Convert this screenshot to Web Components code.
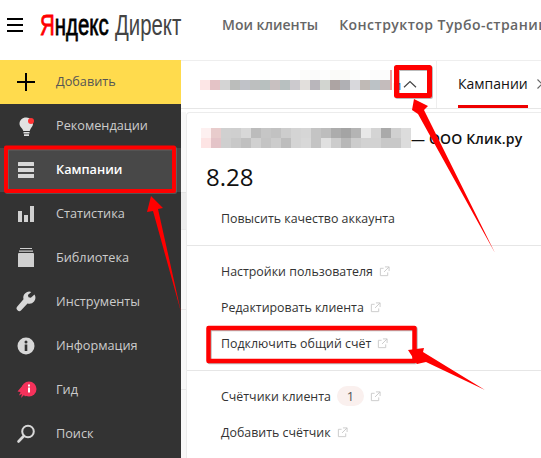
<!DOCTYPE html>
<html lang="ru">
<head>
<meta charset="utf-8">
<title>Яндекс Директ</title>
<style>
  html, body { margin: 0; height: 458px; overflow: hidden; background: #fff; }
  body { font-family: "Open Sans", "Liberation Sans", sans-serif; }
</style>
</head>
<body>
<direct-app>
  <app-header slot="header"></app-header>
  <side-menu slot="menu">
    <side-item kind="add" label="Добавить">
      <svg slot="icon" width="24" height="24" viewBox="0 0 24 24"><path d="M3 11h18v2H3zM11 3h2v18h-2z" fill="#000"/></svg>
    </side-item>
    <side-item label="Рекомендации">
      <svg slot="icon" width="24" height="24" viewBox="0 0 24 24"><path d="M12 3.500a6.600 6.600 0 0 1 7 6.600c0 2.600-2.600 4-3.300 6.900h-6.400C8.600 14.100 5.500 13 5.500 9.800 5.500 6.200 8.500 3.500 12 3.500zM9.500 18h6v1.600h-6zM10 20.300h5V22h-5z" fill="#e2e2e2"/><circle cx="17" cy="7" r="3" fill="#f33"/></svg>
    </side-item>
    <side-item kind="active" label="Кампании">
      <svg slot="icon" width="24" height="24" viewBox="0 0 24 24"><path d="M4 4.500q0-.5.500-.5h15q.5 0 .5.500V8H4zM4 10h16v4H4zM4 16h16v3.500q0 .5-.5.5h-15q-.5 0-.5-.5z" fill="#d8d8d8"/></svg>
    </side-item>
    <side-item label="Статистика">
      <svg slot="icon" width="24" height="24" viewBox="0 0 24 24"><path d="M4 9h4v11H4zM10 13h4v7h-4zM16 4h4v16h-4z" fill="#d0d0d0"/></svg>
    </side-item>
    <side-item label="Библиотека">
      <svg slot="icon" width="24" height="24" viewBox="0 0 24 24"><path d="M6 2h12v1H6zM5 4.500h14v1.200H5zM4 8q0-1 1-1h14q1 0 1 1v13H4z" fill="#d0d0d0"/></svg>
    </side-item>
    <side-item label="Инструменты">
      <svg slot="icon" width="24" height="24" viewBox="0 0 24 24"><path d="M20.500 4.600l-3.700 3.200-2.300-.6-.6-2.300L17.300 2a6 6 0 0 0-7.800 7.200L3.300 16.600a2.600 2.600 0 0 0 .2 3.700 2.600 2.600 0 0 0 3.700-.1l6.300-6.800a6 6 0 0 0 7-8.800z" fill="#d8d8d8"/></svg>
    </side-item>
    <side-item label="Информация">
      <svg slot="icon" width="24" height="24" viewBox="0 0 24 24"><circle cx="12" cy="12" r="8.500" fill="#d8d8d8"/><path d="M10.700 10.600h2.600v6.400h-2.600z" fill="#333"/><circle cx="12" cy="8" r="1.500" fill="#333"/></svg>
    </side-item>
    <side-item label="Гид">
      <svg slot="icon" width="24" height="24" viewBox="0 0 24 24"><circle cx="15" cy="11" r="7.500" fill="#f5325b"/><path d="M9 7L3.500 13.500l3 .5L5 17.500l3-1.500-1 4 3-3 1 1.500 2-1.500z" fill="#f5325b"/><path d="M14 6.500h2v2h-2zM14 9.500h2v5h-2z" fill="#fff"/></svg>
    </side-item>
    <side-item label="Поиск">
      <svg slot="icon" width="24" height="24" viewBox="0 0 24 24"><circle cx="14" cy="9.500" r="5.800" fill="none" stroke="#d8d8d8" stroke-width="2"/><path d="M9.800 14L4.500 19.500" stroke="#d8d8d8" stroke-width="2.600" stroke-linecap="round"/></svg>
    </side-item>
  </side-menu>
  <sub-bar slot="bar"></sub-bar>
  <account-popup slot="popup">
    <popup-section>
      <popup-link>Повысить качество аккаунта</popup-link>
    </popup-section>
    <popup-section>
      <popup-link external>Настройки пользователя</popup-link>
      <popup-link external>Редактировать клиента</popup-link>
      <popup-link external>Подключить общий счёт</popup-link>
    </popup-section>
    <popup-section>
      <popup-link external badge="1">Счётчики клиента</popup-link>
      <popup-link external>Добавить счётчик</popup-link>
    </popup-section>
  </account-popup>
  <red-marks slot="marks"></red-marks>
</direct-app>

<script>
const shell = document.createElement('template')
shell.innerHTML = `
  <style>
    :host {
      display: grid;
      grid-template-columns: 181px 1fr;
      grid-template-rows: 60px 398px;
      width: 541px;
      height: 458px;
      overflow: hidden;
      position: relative;
    }
    .head { grid-column: 1 / 3; }
    .main { display: flex; flex-direction: column; min-width: 0; overflow: hidden; }
    .below { display: grid; grid-template-columns: 5px 1fr; flex: 1; min-height: 0; }
    .strip {
      background:
        linear-gradient(#e4e4e4, #e4e4e4) 0 80px / 100% 1px no-repeat,
        linear-gradient(#e8e8e8, #e8e8e8) 0 117px / 100% 1px no-repeat,
        linear-gradient(#e8e8e8, #e8e8e8) 0 197px / 100% 1px no-repeat,
        linear-gradient(#e8e8e8, #e8e8e8) 0 277px / 100% 1px no-repeat,
        linear-gradient(#ededed, #ededed) 0 81px / 100% 36px no-repeat,
        #f8f8f8;
    }
  </style>
  <div class="head"><slot name="header"></slot></div>
  <slot name="menu"></slot>
  <div class="main">
    <slot name="bar"></slot>
    <div class="below">
      <div class="strip"></div>
      <slot name="popup"></slot>
    </div>
  </div>
  <slot name="marks"></slot>
`
customElements.define('direct-app', class extends HTMLElement {
  constructor () {
    super()
    this.attachShadow({ mode: 'open' }).appendChild(shell.content.cloneNode(true))
  }
})

const header = document.createElement('template')
header.innerHTML = `
  <style>
    :host {
      display: flex;
      align-items: center;
      height: 60px;
      background: #fff;
      white-space: nowrap;
      overflow: hidden;
    }
    .burger { width: 16px; height: 14px; margin: 0 17px 10px 7px; flex: none;
      background: linear-gradient(#000 2px, transparent 2px) 0 0 / 100% 6px; }
    .logo {
      font-family: "Liberation Sans", sans-serif;
      font-size: 30px;
      line-height: 36px;
      width: 142px;
      flex: none;
      margin-bottom: 11px;
      color: #000;
    }
    .logo div { display: inline-block; transform: scaleX(.68); transform-origin: 0 50%; }
    .logo b { font-weight: 400; -webkit-text-stroke: .8px #000; }
    .logo i { font-style: normal; color: #f00; -webkit-text-stroke: .8px #f00; }
    .logo span { color: #444; margin-left: 1px; }
    nav { display: flex; gap: 21px; margin-left: 40px; font-size: 14px; font-weight: 600; color: #666; margin-bottom: 11px; }
    .wide { letter-spacing: .45px; }
  </style>
  <div class="burger"></div>
  <div class="logo"><div><b><i>Я</i>ндекс</b> <span>Директ</span></div></div>
  <nav><span>Мои клиенты</span><span class="wide">Конструктор Турбо-страниц</span></nav>
`
customElements.define('app-header', class extends HTMLElement {
  constructor () {
    super()
    this.attachShadow({ mode: 'open' }).appendChild(header.content.cloneNode(true))
  }
})

customElements.define('side-menu', class extends HTMLElement {
  constructor () {
    super()
    this.attachShadow({ mode: 'open' }).innerHTML = `
      <style>:host { display: block; background: #333; height: 398px; }</style>
      <slot></slot>`
  }
})

customElements.define('side-item', class extends HTMLElement {
  constructor () {
    super()
    this.attachShadow({ mode: 'open' }).innerHTML = `
      <style>
        :host {
          display: flex;
          align-items: center;
          gap: 18px;
          height: 44px;
          padding-left: 14px;
          font-size: 12.700px;
          color: #ccc;
          white-space: nowrap;
        }
        :host([kind="add"]) { background: #ffdb4d; color: #555; }
        :host([kind="active"]) { background: #484848; color: #fff; font-weight: 600; }
        slot[name="icon"] { display: block; height: 24px; }
        span { position: relative; top: -1px; }
      </style>
      <slot name="icon"></slot>
      <span>${this.getAttribute('label')}</span>`
  }
})

/* pixelated stand-in for the hidden account name */
customElements.define('pixel-blur', class extends HTMLElement {
  constructor () {
    super()
    const rows = this.getAttribute('rows').split('|').map((row) => row.split(','))
    const size = this.getAttribute('size') || 10
    const cells = rows.flat().map((color) => `<i style="background:${color}"></i>`).join('')
    this.attachShadow({ mode: 'open' }).innerHTML = `
      <style>
        :host { display: grid; grid-template-columns: repeat(${rows[0].length}, ${size}px); grid-auto-rows: ${size}px; flex: none; }
        i { display: block; }
      </style>${cells}`
  }
})

const bar = document.createElement('template')
bar.innerHTML = `
  <style>
    :host {
      display: flex;
      flex: none;
      height: 47px;
      border-top: 1px solid #eee;
      border-bottom: 1px solid #e6e6e6;
      background: #fff;
      white-space: nowrap;
      overflow: hidden;
      margin-bottom: 3px;
    }
    .name { display: flex; align-items: flex-start; padding: 9px 0 0 19px; width: 222px; flex: none; box-sizing: border-box; }
    .cut { width: 2px; height: 20px; background: #ee9a9a; flex: none; }
    .tail { font-size: 13px; color: #1a3a8a; line-height: 12px; margin: 9px 0 0 1px; }
    .arrow { width: 14px; height: 8px; margin-top: 19px; flex: none; }
    .tabs { display: flex; margin-left: 19px; border-left: 1px solid #eee; padding-left: 21px; font-size: 14px; color: #111; gap: 9px; height: 47px; }
    .tab { display: block; height: 44px; border-bottom: 3px solid #e00; line-height: 46px; box-sizing: content-box; }
    .next { width: 6px; height: 10px; margin-top: 18px; flex: none; }
  </style>
  <div class="name">
    <pixel-blur size="10" rows="#fff,#fff,#fff,#fff,#fff,#fff,#fdfefd,#fff,#fff,#fff,#fcfcfa,#fafafa,#fdfdfd,#fafaf8,#fafaf8,#fcfdfc,#fff,#fcfcfc,#fcfcfc|#fde6e6,#e4c3c6,#d4d4d4,#bbbdbb,#c0c2c8,#bdbfbf,#b8c0bf,#c8c0c0,#b8c0c0,#cccace,#e2dfdc,#b9b6bb,#d2d5d0,#ada4a3,#b0b0b4,#d8d8dc,#c0bab6,#bcc2c6,#c4bcbc"></pixel-blur>
    <div class="cut"></div>
    <div class="tail">и</div>
  </div>
  <svg class="arrow" viewBox="0 0 14 8"><path d="M1 7.200L7 1.500l6 5.700" fill="none" stroke="#444" stroke-width="1.200"/></svg>
  <div class="tabs">
    <span class="tab">Кампании</span>
    <svg class="next" viewBox="0 0 6 10"><path d="M.5.500L5 5 .5 9.500" fill="none" stroke="#666" stroke-width="1.200"/></svg>
  </div>
`
customElements.define('sub-bar', class extends HTMLElement {
  constructor () {
    super()
    this.attachShadow({ mode: 'open' }).appendChild(bar.content.cloneNode(true))
  }
})

const popup = document.createElement('template')
popup.innerHTML = `
  <style>
    :host {
      display: block;
      background: #fff;
      border-top: 1px solid #ececec;
      border-left: 1px solid #ececec;
      border-top-left-radius: 4px;
      overflow: hidden;
    }
    .title { display: flex; align-items: center; padding: 15px 0 0 14px; font-size: 14px; font-weight: 600; letter-spacing: .15px; color: #111; white-space: nowrap; }
    .num { font-size: 24px; line-height: 32px; color: #111; padding: 13px 0 0 19px; }
    ::slotted(popup-section:first-of-type) { border-top: 0; padding: 7px 0 9px; }
  </style>
  <div class="title">
    <pixel-blur size="10" rows="#fdf0f0,#e8cccc,#d0d0d0,#cfcfcf,#d8d8d8,#bcbcbc,#c6c6c6,#c2c2c2,#cdcdcd,#d4d4d4,#d6d6d6,#c4c4c4,#bdbdbd,#acacac,#a4a4a4,#b4b4b4,#e8e8e8,#d4d4d4,#aaaaaa,#d0d0d0,#dcdcdc|#fde4e4,#e4c4c8,#cfcfcf,#c8c8c8,#c0c0c0,#d0d0d0,#c4c4c4,#cccccc,#bdbdbd,#d4d4d4,#d8d8d8,#c4c4c4,#e0e0e0,#cccccc,#b8b8b8,#cccccc,#d2d2d2,#d2d2d2,#c8c8c8,#c8c8c8,#dcdcdc"></pixel-blur>
    <span>— ООО Клик.ру</span>
  </div>
  <div class="num">8.28</div>
  <slot></slot>
`
customElements.define('account-popup', class extends HTMLElement {
  constructor () {
    super()
    this.attachShadow({ mode: 'open' }).appendChild(popup.content.cloneNode(true))
  }
})

customElements.define('popup-section', class extends HTMLElement {
  constructor () {
    super()
    this.attachShadow({ mode: 'open' }).innerHTML = `
      <style>
        :host { display: block; border-top: 1px solid #e6e6e6; padding: 7px 0 9px; }
      </style>
      <slot></slot>`
  }
})

customElements.define('popup-link', class extends HTMLElement {
  constructor () {
    super()
    const icon = this.hasAttribute('external')
      ? `<svg width="11" height="11" viewBox="0 0 12 12" fill="none" stroke="#c8c8c8"><path d="M9.500 7v3.500h-8v-8H5M6.500 1h4.500v4.500M11 1L5.500 6.500"/></svg>`
      : ''
    const badge = this.getAttribute('badge')
    this.attachShadow({ mode: 'open' }).innerHTML = `
      <style>
        :host {
          display: flex;
          align-items: center;
          gap: 6px;
          height: 36px;
          padding-left: 34px;
          font-size: 12.400px;
          color: #333;
          white-space: nowrap;
        }
        .badge { display: inline-block; width: 27px; height: 20px; line-height: 20px; text-align: center; border-radius: 10px; background: #faf0ee; font-size: 13px; margin: 0 0 0 0; color: #555; }
      </style>
      <slot></slot>${badge ? `<span class="badge">${badge}</span>` : ''}${icon}`
  }
})

customElements.define('red-marks', class extends HTMLElement {
  constructor () {
    super()
    this.attachShadow({ mode: 'open' }).innerHTML = `
      <style>
        :host { display: block; position: absolute; left: 0; top: 0; width: 541px; height: 458px; pointer-events: none; }
        svg { display: block; }
      </style>
      <svg width="541" height="458" viewBox="0 0 541 458">
        <g fill="none" stroke="#777" stroke-linejoin="round" transform="translate(1 1)" opacity=".5">
          <rect x="6" y="147.500" width="168" height="43.500" stroke-width="4"/>
          <rect x="396.500" y="67.500" width="33" height="28" stroke-width="5"/>
          <rect x="208.500" y="328" width="206" height="33" stroke-width="4.500"/>
        </g>
        <g fill="none" stroke="#f00" stroke-linejoin="round">
          <rect x="6" y="147.500" width="168" height="43.500" stroke-width="4"/>
          <rect x="396.500" y="67.500" width="33" height="28" stroke-width="5"/>
          <rect x="208.500" y="328" width="206" height="33" stroke-width="4.500"/>
        </g>
        <g fill="#f00">
          <polygon points="151,196 163,208 158,209 181,312 153,211 147,212"/>
          <polygon points="414,99 428,106 424,110 495,253 418,114 412,110"/>
          <polygon points="408,350 424,348 423,352 485,390 426,362 417,364"/>
        </g>
      </svg>`
  }
})
</script>
</body>
</html>
